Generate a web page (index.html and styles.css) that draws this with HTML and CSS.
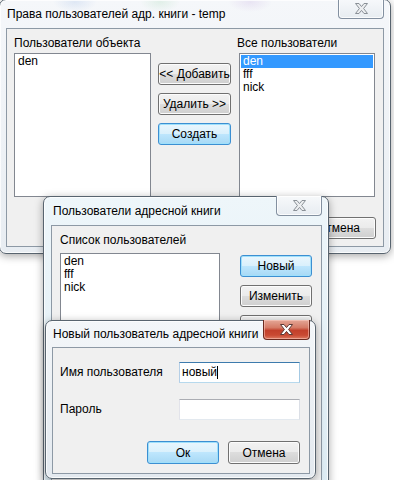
FILE: index.html
```html
<!DOCTYPE html>
<html lang="ru">
<head>
  <meta charset="UTF-8" />
  <title>Права пользователей</title>
  <link rel="stylesheet" href="styles.css">
</head>
<body>
  <div class="desk">

    <!-- окно 1: права пользователей -->
    <div class="win win-rights">
      <div class="titlebar">
        <span class="title">Права пользователей адр. книги - temp</span>
        <span class="close">
          <svg width="13" height="11" viewBox="0 0 13 11"><polygon points="0.5,0.5 4,0.5 6.5,3.6 9,0.5 12.5,0.5 8.6,5.5 12.5,10.5 9,10.5 6.5,7.4 4,10.5 0.5,10.5 4.4,5.5" /></svg>
        </span>
      </div>
      <div class="client rights">
        <div class="label lbl-obj">Пользователи объекта</div>
        <div class="listbox list-obj">
          <div class="item">den</div>
        </div>
        <div class="btn-col">
          <button class="btn">&lt;&lt; Добавить</button>
          <button class="btn">Удалить &gt;&gt;</button>
          <button class="btn default">Создать</button>
        </div>
        <div class="label lbl-all">Все пользователи</div>
        <div class="listbox list-all">
          <div class="item sel">den</div>
          <div class="item">fff</div>
          <div class="item">nick</div>
        </div>
        <div class="footer">
          <button class="btn btn-foot">ОК</button>
          <button class="btn btn-foot">Отмена</button>
        </div>
      </div>
    </div>

    <!-- окно 2: пользователи адресной книги -->
    <div class="win win-users">
      <div class="titlebar">
        <span class="title">Пользователи адресной книги</span>
        <span class="close">
          <svg width="13" height="11" viewBox="0 0 13 11"><polygon points="0.5,0.5 4,0.5 6.5,3.6 9,0.5 12.5,0.5 8.6,5.5 12.5,10.5 9,10.5 6.5,7.4 4,10.5 0.5,10.5 4.4,5.5" /></svg>
        </span>
      </div>
      <div class="client users">
        <div class="label">Список пользователей</div>
        <div class="listbox list-users">
          <div class="item">den</div>
          <div class="item">fff</div>
          <div class="item">nick</div>
        </div>
        <div class="btn-col">
          <button class="btn default">Новый</button>
          <button class="btn">Изменить</button>
          <button class="btn">Удалить</button>
        </div>
      </div>
    </div>

    <!-- окно 3: новый пользователь -->
    <div class="win win-new">
      <div class="titlebar">
        <span class="title">Новый пользователь адресной книги</span>
        <span class="close active">
          <svg width="13" height="11" viewBox="0 0 13 11"><polygon points="0.5,0.5 4,0.5 6.5,3.6 9,0.5 12.5,0.5 8.6,5.5 12.5,10.5 9,10.5 6.5,7.4 4,10.5 0.5,10.5 4.4,5.5" /></svg>
        </span>
      </div>
      <div class="client form">
        <div class="label">Имя пользователя</div>
        <div class="edit focus">новый<span class="caret"></span></div>
        <div class="label">Пароль</div>
        <div class="edit"></div>
        <div class="footer">
          <button class="btn btn-dlg default">Ок</button>
          <button class="btn btn-dlg">Отмена</button>
        </div>
      </div>
    </div>

  </div>
</body>
</html>
```

FILE: styles.css
```css
* {
  box-sizing: border-box;
}

body {
  margin: 0;
  background: #fff;
  font-family: "Liberation Sans", Arial, sans-serif;
  font-size: 12px;
  color: #000;
}

.desk {
  position: relative;
  width: 394px;
  height: 480px;
  overflow: hidden;
}

/* окна */
.win {
  position: absolute;
  display: flex;
  flex-direction: column;
  border: 1px solid #58646f;
  border-radius: 7px;
  padding: 0 6px 6px 6px;
  background: linear-gradient(#f6f8fb, #e6ecf1);
  box-shadow: inset 0 0 0 1px rgba(255, 255, 255, 0.75), 0 2px 9px rgba(0, 0, 0, 0.35);
}

.win-rights {
  left: -1px;
  top: -1px;
  width: 392px;
  height: 255px;
  background:
    radial-gradient(ellipse 22px 10px at 75px 2px, rgba(120, 160, 220, 0.18), transparent),
    radial-gradient(ellipse 20px 10px at 160px 2px, rgba(120, 200, 140, 0.16), transparent),
    radial-gradient(ellipse 22px 10px at 250px 2px, rgba(170, 130, 210, 0.16), transparent),
    linear-gradient(#f5f7fa, #e8edf2);
}

.win-users {
  left: 43px;
  top: 196px;
  width: 286px;
  height: 300px;
  padding-left: 7px;
  background: linear-gradient(#eef6fa, #dcebf3);
}

.win-new {
  left: 45px;
  top: 320px;
  width: 271px;
  height: 159px;
  padding-right: 5px;
  padding-bottom: 4px;
  background: linear-gradient(#f3f6f9, #e3e9ef);
}

.titlebar {
  display: flex;
  align-items: center;
  height: 28px;
  flex: none;
}

.win-new .titlebar {
  height: 26px;
}

.title {
  flex: 1;
  min-width: 0;
  padding-left: 1px;
  white-space: nowrap;
  color: #000;
}

.win-users .title {
  padding-left: 2px;
}

.close {
  flex: none;
  align-self: flex-start;
  margin-top: -1px;
  width: 46px;
  height: 20px;
  display: flex;
  align-items: center;
  justify-content: center;
  border: 1px solid #8390a0;
  border-top: none;
  border-radius: 0 0 4px 4px;
  background: linear-gradient(#f7f9fb, #e7ecf1);
  box-shadow: inset 0 0 0 1px rgba(255, 255, 255, 0.8);
}

.close svg polygon {
  fill: #eceef0;
  stroke: #8a9097;
  stroke-width: 1;
}

.close.active {
  width: 47px;
  border-color: #6b2a1f;
  background: linear-gradient(#e4a797 0%, #d57b66 40%, #c2402b 55%, #c94a33 80%, #dd7b62 100%);
  box-shadow: inset 0 0 0 1px rgba(255, 210, 200, 0.5);
}

.close.active svg polygon {
  fill: #fff;
  stroke: #5b3a36;
}

/* клиентская область */
.client {
  flex: 1;
  border: 1px solid #8d99a5;
  background: #f0f0f0;
}

.label {
  line-height: 15px;
  white-space: nowrap;
}

.listbox {
  background: #fff;
  border: 1px solid #828790;
  padding: 1px;
}

.item {
  height: 13px;
  line-height: 13px;
  padding-left: 2px;
}

.item.sel {
  background: #3399ff;
  color: #fff;
}

/* кнопки */
.btn {
  height: 22px;
  padding: 0;
  font-family: inherit;
  font-size: 12px;
  white-space: nowrap;
  color: #000;
  border: 1px solid #707070;
  border-radius: 3px;
  background: linear-gradient(#f2f2f2 0%, #ebebeb 50%, #dddddd 50%, #cfcfcf 100%);
  box-shadow: inset 0 0 0 1px #fcfcfc;
}

.btn.default {
  border-color: #3c8fd2;
  background: linear-gradient(#eaf6fd 0%, #d9f0fc 50%, #bee6fd 50%, #a7d9f5 100%);
  box-shadow: inset 0 0 0 1px #9fe0fb;
}

.btn-col {
  display: flex;
  flex-direction: column;
  gap: 8px;
}

.footer {
  display: flex;
  justify-content: flex-end;
}

/* окно 1 */
.rights {
  display: grid;
  grid-template-columns: 137px 73px 138px;
  grid-template-rows: 15px 144px auto;
  column-gap: 7px;
  row-gap: 2px;
  padding: 7px;
}

.lbl-obj {
  grid-column: 1;
  grid-row: 1;
}

.list-obj {
  grid-column: 1;
  grid-row: 2;
}

.rights .btn-col {
  grid-column: 2;
  grid-row: 1 / span 2;
  padding-top: 27px;
}

.lbl-all {
  grid-column: 3;
  grid-row: 1;
  margin-left: -1px;
}

.list-all {
  grid-column: 3;
  grid-row: 2;
  margin: 0 1px;
}

.rights .footer {
  grid-column: 1 / -1;
  grid-row: 3;
  margin-top: 18px;
  gap: 7px;
}

.btn-foot {
  width: 75px;
}

/* окно 2 */
.users {
  display: grid;
  grid-template-columns: 160px 72px;
  grid-template-rows: 15px 220px;
  column-gap: 20px;
  row-gap: 5px;
  padding: 7px 8px;
}

.users .label {
  grid-column: 1 / -1;
}

.users .btn-col {
  margin-top: 2px;
}

/* окно 3 */
.form {
  display: grid;
  grid-template-columns: 1fr 121px;
  grid-template-rows: 21px 21px auto;
  row-gap: 16px;
  padding: 14px 9px 9px 7px;
  align-items: center;
}

.edit {
  height: 21px;
  line-height: 19px;
  padding-left: 2px;
  background: #fff;
  border: 1px solid;
  border-color: #abadb3 #dbdfe6 #e3e9ef #e2e3ea;
}

.edit.focus {
  border-color: #3d7bad #a4c9e3 #b7d9ed #b5cfe7;
}

.caret {
  display: inline-block;
  width: 1px;
  height: 13px;
  vertical-align: -3px;
  background: #000;
}

.form .footer {
  grid-column: 1 / -1;
  margin-top: 5px;
  gap: 9px;
}

.btn-dlg {
  width: 72px;
  height: 23px;
}
```
